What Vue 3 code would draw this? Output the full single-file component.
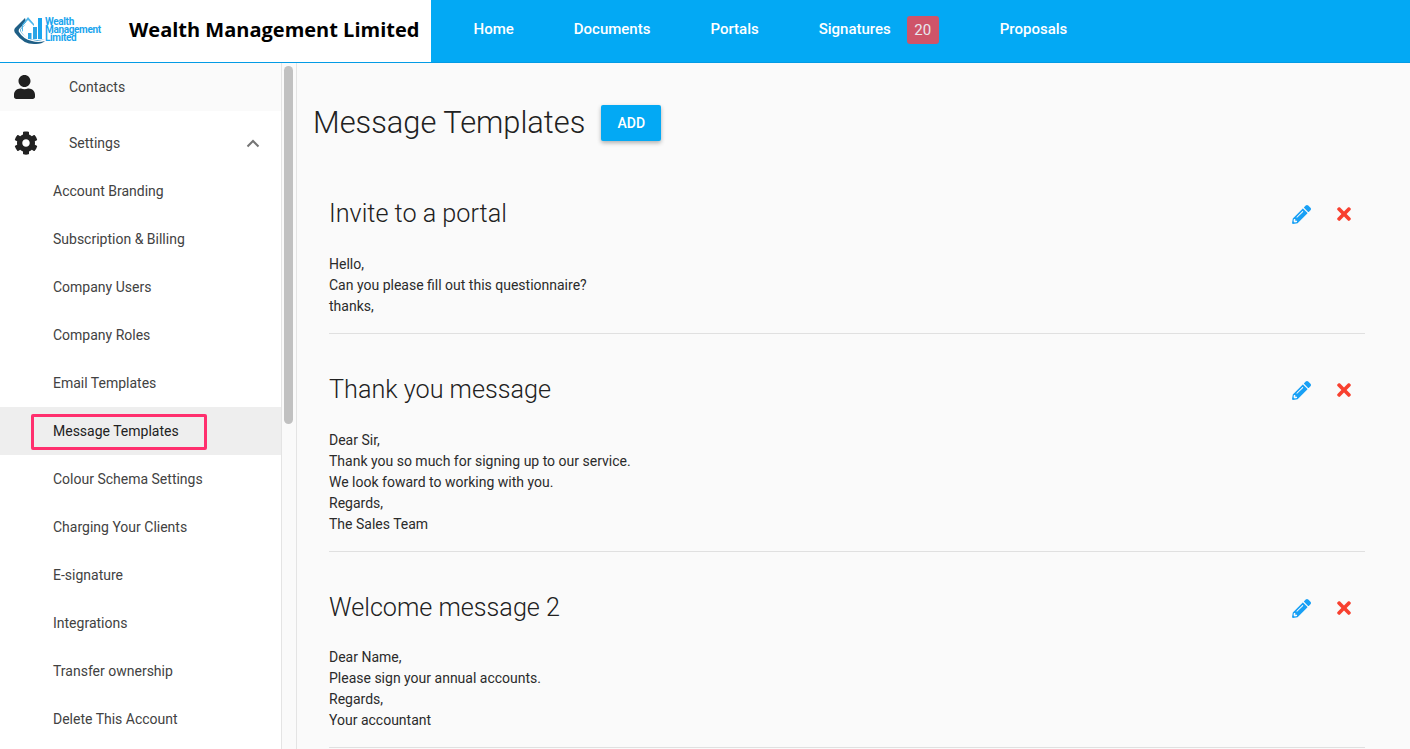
<script setup>
const navItems = [
  { label: 'Home' },
  { label: 'Documents' },
  { label: 'Portals' },
  { label: 'Signatures', badge: 20 },
  { label: 'Proposals' }
]
const subItems = [
  'Account Branding', 'Subscription & Billing', 'Company Users', 'Company Roles',
  'Email Templates', 'Message Templates', 'Colour Schema Settings', 'Charging Your Clients',
  'E-signature', 'Integrations', 'Transfer ownership', 'Delete This Account'
]
const templates = [
  { title: 'Invite to a portal', lines: ['Hello,', 'Can you please fill out this questionnaire?', 'thanks,'] },
  { title: 'Thank you message', lines: ['Dear Sir,', 'Thank you so much for signing up to our service.', 'We look foward to working with you.', 'Regards,', 'The Sales Team'] },
  { title: 'Welcome message 2', lines: ['Dear Name,', 'Please sign your annual accounts.', 'Regards,', 'Your accountant'] }
]
</script>

<template>
  <div class="app">
    <header class="header">
      <div class="brand">
        <div class="logo">
          <svg class="logo-mark" viewBox="0 0 32 32" width="32" height="32">
            <path d="M11 3 L1 13 Q-1 16 2 19 Q10 30 22 29 Q28 29 31 26 Q24 28 18 26 Q9 24 5 17 Q4 15 6 13 L12 7 Z" fill="#1f5f86"/>
            <path d="M12 9 L7.5 13.5 Q6 15.5 8 18 Q13 25 23 25 Q28 25 31 24 Q24 27 17 24.5 Q10 22 6.5 16.5 Q5.5 15 7 13 Z" fill="#2c93c9"/>
            <path d="M14 2 L20 9 V11 L14 5 L9 10.5 V17 L8 15.5 V10 Z" fill="#4db6ea"/>
            <rect x="14" y="18" width="3.5" height="6" fill="#2aa4e6"/>
            <rect x="19" y="12" width="4" height="12" fill="#2aa4e6"/>
            <rect x="24" y="3" width="4" height="21" fill="#1aa5ee"/>
          </svg>
          <div class="logo-text"><span>Wealth</span><span>Management</span><span>Limited</span></div>
        </div>
        <div class="company">Wealth Management Limited</div>
      </div>
      <nav class="nav">
        <a v-for="item in navItems" :key="item.label" class="nav-item">
          {{ item.label }}
          <span v-if="item.badge" class="badge">{{ item.badge }}</span>
        </a>
      </nav>
    </header>

    <div class="body">
      <aside class="sidebar">
        <div class="top-item contacts">
          <svg class="side-icon" viewBox="0 0 448 512" width="21" height="24"><path fill="#212121" d="M224 256c70.7 0 128-57.3 128-128S294.7 0 224 0 96 57.3 96 128s57.3 128 128 128zm89.6 32h-16.7c-22.2 10.2-46.9 16-72.9 16s-50.6-5.8-72.9-16h-16.7C60.2 288 0 348.2 0 422.4V464c0 26.5 21.5 48 48 48h352c26.5 0 48-21.5 48-48v-41.6c0-74.2-60.2-134.4-134.4-134.4z"/></svg>
          <span>Contacts</span>
        </div>
        <div class="top-item settings">
          <svg class="side-icon" viewBox="0 0 512 512" width="24" height="24"><path fill="#212121" d="M487.4 315.7l-42.6-24.6c4.3-23.2 4.3-47 0-70.2l42.6-24.6c4.9-2.8 7.1-8.6 5.5-14-11.1-35.6-30-67.8-54.7-94.6-3.8-4.1-10-5.1-14.8-2.3L380.8 110c-17.9-15.4-38.5-27.3-60.8-35.1V25.8c0-5.6-3.9-10.5-9.4-11.7-36.7-8.2-74.3-7.8-109.2 0-5.5 1.2-9.4 6.1-9.4 11.7V75c-22.2 7.9-42.8 19.8-60.8 35.1L88.7 85.5c-4.9-2.8-11-1.9-14.8 2.3-24.7 26.7-43.6 58.9-54.7 94.6-1.7 5.4.6 11.2 5.5 14L67.3 221c-4.3 23.2-4.3 47 0 70.2l-42.6 24.6c-4.9 2.8-7.1 8.6-5.5 14 11.1 35.6 30 67.8 54.7 94.6 3.8 4.1 10 5.1 14.8 2.3l42.6-24.6c17.9 15.4 38.5 27.3 60.8 35.1v49.2c0 5.6 3.9 10.5 9.4 11.7 36.7 8.2 74.3 7.8 109.2 0 5.5-1.2 9.4-6.1 9.4-11.7v-49.2c22.2-7.9 42.8-19.8 60.8-35.1l42.6 24.6c4.9 2.8 11 1.9 14.8-2.3 24.7-26.7 43.6-58.9 54.7-94.6 1.5-5.5-.7-11.3-5.6-14.1zM256 336c-44.1 0-80-35.9-80-80s35.9-80 80-80 80 35.9 80 80-35.9 80-80 80z"/></svg>
          <span>Settings</span>
          <svg class="chevron" viewBox="0 0 14 9" width="14" height="9"><path d="M1.5 7.5 L7 2 L12.5 7.5" fill="none" stroke="#757575" stroke-width="2"/></svg>
        </div>
        <div v-for="s in subItems" :key="s" class="sub-item" :class="{ active: s === 'Message Templates' }">
          <span v-if="s === 'Message Templates'" class="callout"></span>
          {{ s }}
        </div>
      </aside>

      <div class="scrollbar"><div class="thumb"></div></div>

      <main class="main">
        <div class="page-head">
          <h1>Message Templates</h1>
          <button class="add">ADD</button>
        </div>
        <section v-for="t in templates" :key="t.title" class="template">
          <div class="template-head">
            <h2>{{ t.title }}</h2>
            <div class="actions">
              <svg viewBox="0 0 512 512" width="19" height="19"><path fill="#18a0f5" d="M497.9 142.1l-46.1 46.1c-4.7 4.7-12.3 4.7-17 0l-111-111c-4.7-4.7-4.7-12.3 0-17l46.1-46.1c18.7-18.7 49.1-18.7 67.9 0l60.1 60.1c18.8 18.7 18.8 49.1 0 67.9zM284.2 99.8L21.6 362.4.4 483.9c-2.9 16.4 11.4 30.6 27.8 27.8l121.5-21.3 262.6-262.6c4.7-4.7 4.7-12.3 0-17l-111-111c-4.8-4.7-12.4-4.7-17.1 0zM124.1 339.9c-5.5-5.5-5.5-14.3 0-19.8l154-154c5.5-5.5 14.3-5.5 19.8 0s5.5 14.3 0 19.8l-154 154c-5.5 5.5-14.3 5.5-19.8 0zM88 424h48v36.3l-64.5 11.3-31.1-31.1L51.7 376H88v48z"/></svg>
              <svg viewBox="0 0 352 512" width="14" height="20"><path fill="#f8402f" d="M242.72 256l100.07-100.07c12.28-12.28 12.28-32.19 0-44.48l-22.24-22.24c-12.28-12.28-32.19-12.28-44.48 0L176 189.28 75.93 89.21c-12.28-12.28-32.19-12.28-44.48 0L9.21 111.45c-12.28 12.28-12.28 32.19 0 44.48L109.28 256 9.21 356.07c-12.28 12.28-12.28 32.19 0 44.48l22.24 22.24c12.28 12.28 32.2 12.28 44.48 0L176 322.72l100.07 100.07c12.28 12.28 32.2 12.28 44.48 0l22.24-22.24c12.28-12.28 12.28-32.19 0-44.48L242.72 256z"/></svg>
            </div>
          </div>
          <p v-for="(l, i) in t.lines" :key="i" class="line">{{ l }}</p>
        </section>
      </main>
    </div>
  </div>
</template>

<style>
html, body { margin: 0; overflow: hidden; }
</style>

<style scoped>
.app {
  width: 1410px;
  height: 749px;
  overflow: hidden;
  display: flex;
  flex-direction: column;
  font-family: Roboto, "Liberation Sans", sans-serif;
  color: #212121;
  background: #fff;
}
.header {
  display: flex;
  height: 62px;
  flex: none;
  border-bottom: 1px solid #039be5;
}
.brand {
  width: 431px;
  flex: none;
  display: flex;
  align-items: center;
  background: #fff;
  padding: 0 0 3px 14px;
  box-sizing: border-box;
}
.logo {
  display: flex;
  align-items: center;
  width: 115px;
  flex: none;
}
.logo-mark { flex: none; margin-right: -1px; margin-top: 3px; }
.logo-text {
  display: flex;
  flex-direction: column;
  font-size: 10px;
  line-height: 8px;
  font-weight: 700;
  color: #1aa5ee;
  letter-spacing: -0.35px;
}
.company {
  font-family: "Open Sans", sans-serif;
  font-weight: 700;
  font-size: 20px;
  color: #000;
  white-space: nowrap;
}
.nav {
  flex: 1;
  background: #03a9f4;
  display: flex;
  align-items: center;
  padding: 0 0 4px 12.5px;
}
.nav-item {
  display: flex;
  align-items: center;
  padding: 0 30px;
  color: #fff;
  font-size: 15px;
  font-weight: 500;
  white-space: nowrap;
}
.badge {
  width: 32px;
  height: 28px;
  margin: 2px 1px 0 16px;
  border-radius: 3px;
  background: #cf5469;
  color: #e8e8ee;
  font-size: 15px;
  font-weight: 400;
  display: flex;
  align-items: center;
  justify-content: center;
}
.body {
  flex: 1;
  display: flex;
  min-height: 0;
}
.sidebar {
  width: 281px;
  flex: none;
  background: #fff;
  border-right: 1px solid #e4e4e4;
  font-size: 14px;
  color: #424242;
}
.top-item {
  height: 48px;
  display: flex;
  align-items: center;
  position: relative;
  padding-left: 69px;
}
.contacts { background: #fafafa; margin-bottom: 8px; }
.side-icon { position: absolute; left: 14px; top: 12px; }
.chevron { position: absolute; left: 246px; top: 20px; }
.sub-item {
  height: 48px;
  display: flex;
  align-items: center;
  padding-left: 53px;
  position: relative;
}
.sub-item.active {
  background: #eeeeee;
  color: #212121;
}
.callout {
  position: absolute;
  left: 31px;
  top: 7px;
  width: 176px;
  height: 36px;
  border: 3px solid #ff2f6e;
  border-radius: 2px;
  box-sizing: border-box;
}
.scrollbar {
  flex: none;
  background: #fafafa;
  border-right: 1px solid #e4e4e4;
  padding: 3px 3px 0 2px;
  width: 9px;
}
.thumb {
  width: 9px;
  height: 358px;
  border-radius: 5px;
  background: #c1c1c1;
}
.main {
  flex: 1;
  background: #fafafa;
  padding: 0 45px 0 16px;
  min-width: 0;
}
.page-head {
  display: flex;
  align-items: center;
  height: 36px;
  margin: 42px 0 17px;
  gap: 16px;
}
h1 {
  margin: 0 0 2px;
  font-size: 30.8px;
  font-weight: 300;
  color: #212121;
  white-space: nowrap;
}
.add {
  width: 60px;
  height: 36px;
  border: 0;
  border-radius: 2px;
  background: #03a9f4;
  color: #fff;
  font: 500 14px Roboto, sans-serif;
  box-shadow: 0 2px 4px rgba(0,0,0,.3);
  padding: 0;
}
.template {
  margin-left: 16px;
  padding: 39.5px 0 16px;
  border-bottom: 1px solid #e0e0e0;
}
.template-head {
  display: flex;
  justify-content: space-between;
  align-items: center;
  height: 32px;
  margin-bottom: 24.5px;
}
.template:last-of-type .template-head { margin-bottom: 23.5px; }
h2 {
  margin: 0;
  font-size: 25.2px;
  line-height: 32px;
  font-weight: 300;
  color: #212121;
}
.actions {
  display: flex;
  align-items: center;
  gap: 26px;
  padding: 1px 14px 0 0;
}
.line {
  margin: 0;
  font-size: 14px;
  line-height: 21px;
  color: #2b2b2b;
}
</style>
